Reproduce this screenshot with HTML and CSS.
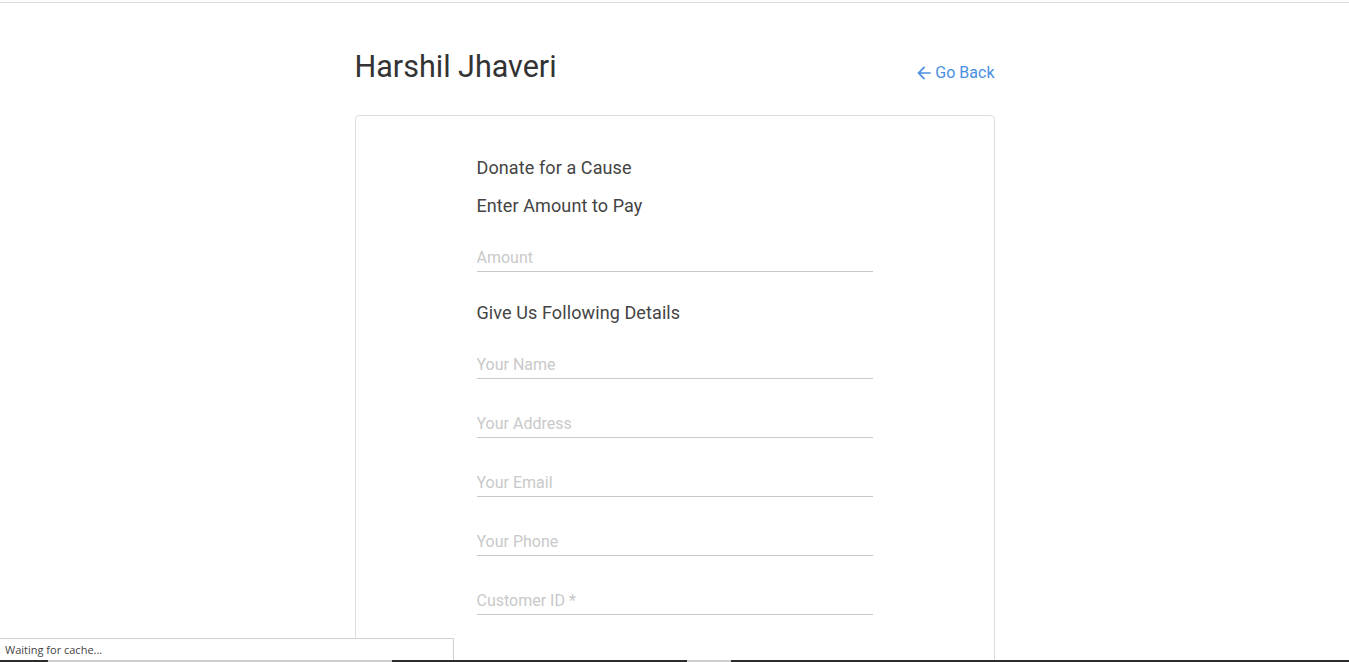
FILE: index.html
```html
<!DOCTYPE html>
<html lang="en">
<head>
<meta charset="utf-8">
<title>Donate</title>
<link rel="stylesheet" href="styles.css">
</head>
<body>
<div class="topbar"></div>
<main class="container">
  <header class="page-head">
    <h1 class="title">Harshil Jhaveri</h1>
    <a class="back" href="#">
      <svg class="back-icon" viewBox="0 0 24 24" width="20" height="20" aria-hidden="true"><path d="M20 11H7.83l5.59-5.59L12 4l-8 8 8 8 1.41-1.41L7.83 13H20v-2z"/></svg>
      <span>Go Back</span>
    </a>
  </header>
  <section class="card">
    <form class="form">
      <p class="label first">Donate for a Cause</p>
      <p class="label">Enter Amount to Pay</p>
      <input class="field" type="text" placeholder="Amount">
      <p class="label section">Give Us Following Details</p>
      <input class="field" type="text" placeholder="Your Name">
      <input class="field spaced" type="text" placeholder="Your Address">
      <input class="field spaced" type="text" placeholder="Your Email">
      <input class="field spaced" type="text" placeholder="Your Phone">
      <input class="field spaced" type="text" placeholder="Customer ID *">
    </form>
  </section>
</main>
<div class="status">Waiting for cache...</div>
<div class="taskbar">
  <span class="seg dark s1"></span>
  <span class="seg light s2"></span>
  <span class="seg dark s3"></span>
  <span class="seg light s4"></span>
  <span class="seg dark s5"></span>
</div>
</body>
</html>
```
FILE: styles.css
```css
html, body {
  margin: 0;
  padding: 0;
  background: #fff;
  font-family: Roboto, "Noto Sans", Arial, sans-serif;
  overflow: hidden;
  height: 662px;
}

.topbar {
  height: 2px;
  border-bottom: 1px solid #dcdcdc;
}

.container {
  width: 640px;
  margin: 0 auto;
}

.page-head {
  display: flex;
  justify-content: space-between;
  align-items: flex-end;
  margin-top: 46px;
}

.title {
  margin: 0;
  font-size: 30.5px;
  line-height: 36px;
  font-weight: 400;
  color: #333;
}

.back {
  display: flex;
  align-items: center;
  gap: 1px;
  font-size: 16px;
  line-height: 20px;
  color: #4a90e2;
  text-decoration: none;
  margin-bottom: 2px;
}

.back-icon {
  fill: #4a90e2;
}

.card {
  margin-top: 30px;
  border: 1px solid #dedede;
  border-radius: 4px;
  height: 640px;
  box-sizing: border-box;
  padding-top: 40px;
}

.form {
  width: 396px;
  margin: 0 auto;
  display: flex;
  flex-direction: column;
}

.label {
  margin: 0;
  font-size: 18px;
  line-height: 24px;
  color: #444;
  letter-spacing: 0.1px;
}

.label.first {
  margin-bottom: 14px;
}

.label.section {
  margin-top: 29px;
  margin-bottom: 27px;
}

.field {
  margin: 27px 0 0;
  display: block;
  width: 100%;
  box-sizing: content-box;
  height: 24px;
  padding: 1px 0 1px;
  border: 0;
  border-bottom: 1px solid #c8c8c8;
  font-family: Roboto, Arial, sans-serif;
  font-size: 16px;
  line-height: 24px;
  color: #333;
  background: transparent;
  outline: none;
}

.label.section + .field {
  margin-top: 0;
}

.field.spaced {
  margin-top: 32px;
}

.field::placeholder {
  color: #c9c9c9;
}

.status {
  position: fixed;
  left: 0;
  bottom: 2px;
  width: 448px;
  height: 21px;
  padding-left: 5px;
  background: #fff;
  border-top: 1px solid #d0d0d0;
  border-right: 1px solid #d0d0d0;
  font-family: "Open Sans", "DejaVu Sans", sans-serif;
  font-size: 11px;
  line-height: 21px;
  color: #444;
}

.taskbar {
  position: fixed;
  left: 0;
  right: 0;
  bottom: 0;
  height: 2px;
  display: flex;
}

.seg {
  height: 2px;
}

.seg.dark { background: #2c2c2a; }
.seg.light { background: #cfcfcf; }
.s1 { width: 48px; }
.s2 { width: 344px; }
.s3 { width: 295px; }
.s4 { width: 44px; }
.s5 { flex: 1; }
```
